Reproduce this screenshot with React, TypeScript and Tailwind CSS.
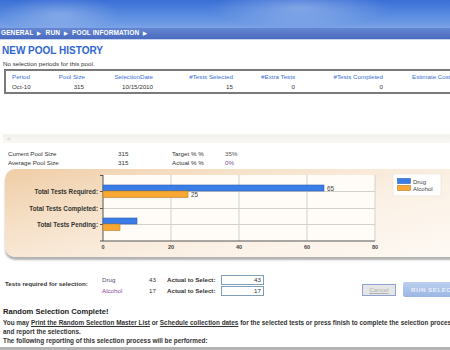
const rows = [
  { label: 'Total Tests Required:', y: 22, drug: 65, alcohol: 25 },
  { label: 'Total Tests Completed:', y: 39, drug: 0, alcohol: 0 },
  { label: 'Total Tests Pending:', y: 55, drug: 10, alcohol: 5 },
];

function Arrow() {
  return <span className="mx-[4px] text-[5px] text-white">▶</span>;
}

function PoolChart() {
  const x0 = 98;
  const scale = 3.4;
  return (
    <svg width="460" height="88" className="block">
      <rect x={x0} y={6} width={272} height={66} fill="#fffcf7" />
      {[20, 40, 60, 80].map((v) => (
        <line key={v} x1={x0 + v * scale} y1={6} x2={x0 + v * scale} y2={72} stroke="#d4d0c8" strokeWidth={1} />
      ))}
      {rows.map((r) => (
        <line key={r.label} x1={x0 - 3} y1={r.y + 0.5} x2={x0 + 272} y2={r.y + 0.5} stroke="#d4d0c8" strokeWidth={1} />
      ))}
      <line x1={x0} y1={6} x2={x0} y2={72} stroke="#555" strokeWidth={1} />
      <line x1={x0 - 3} y1={72} x2={x0 + 272} y2={72} stroke="#555" strokeWidth={1} />
      <line x1={x0 - 3} y1={6.5} x2={x0} y2={6.5} stroke="#555" strokeWidth={1} />
      {rows.map((r) => (
        <line key={r.label + 't'} x1={x0 - 3} y1={r.y + 0.5} x2={x0} y2={r.y + 0.5} stroke="#555" strokeWidth={1} />
      ))}
      {rows.map((r) => (
        <text key={r.label + 'l'} x={x0 - 5} y={r.y + 2.5} textAnchor="end" fontSize="6.3" fontWeight="bold" fill="#333" fontFamily="Liberation Sans, Arial, sans-serif">
          {r.label}
        </text>
      ))}
      {rows.map((r) =>
        r.drug > 0 ? (
          <g key={r.label + 'b'}>
            <rect x={x0} y={r.y - 6} width={r.drug * scale} height={6} fill="#3b7de6" stroke="#2c5fb4" strokeWidth={0.6} />
            <rect x={x0} y={r.y} width={r.alcohol * scale} height={6.5} fill="#f8a832" stroke="#b77d2a" strokeWidth={0.6} />
          </g>
        ) : null,
      )}
      <text x={x0 + 65 * scale + 3} y={21.5} fontSize="6.3" fill="#444" fontFamily="Liberation Sans, Arial, sans-serif">65</text>
      <text x={x0 + 25 * scale + 3} y={28} fontSize="6.3" fill="#444" fontFamily="Liberation Sans, Arial, sans-serif">25</text>
      {[0, 20, 40, 60, 80].map((v) => (
        <text key={v} x={x0 + v * scale} y={80} textAnchor="middle" fontSize="5.5" fontWeight="bold" fill="#444" fontFamily="Liberation Sans, Arial, sans-serif">
          {v}
        </text>
      ))}
      <rect x={388} y={5} width={48} height={22} fill="#ffffff" stroke="#ece6dc" strokeWidth={0.8} />
      <rect x={392.5} y={9.5} width={13} height={5} fill="#3b7de6" stroke="#2c5fb4" strokeWidth={0.6} />
      <rect x={392.5} y={16.5} width={13} height={5} fill="#f8a832" stroke="#b77d2a" strokeWidth={0.6} />
      <text x={408} y={14.5} fontSize="6" fill="#444" fontFamily="Liberation Sans, Arial, sans-serif">Drug</text>
      <text x={408} y={21.5} fontSize="6" fill="#444" fontFamily="Liberation Sans, Arial, sans-serif">Alcohol</text>
    </svg>
  );
}

export default function App() {
  return (
    <div className="w-[450px] h-[350px] overflow-hidden bg-white font-['Liberation_Sans',Arial,sans-serif] text-[6.2px] leading-none text-[#333]">
      {/* sky header */}
      <div className="h-[28px] bg-[radial-gradient(ellipse_60px_18px_at_60px_14px,rgba(255,255,255,0.25),transparent),radial-gradient(ellipse_90px_20px_at_300px_8px,rgba(255,255,255,0.3),transparent),linear-gradient(180deg,#3a6fd6_0%,#5a8ce0_55%,#7aa2e6_100%)]" />
      <div className="h-[12px] flex items-center pl-[1px] bg-[linear-gradient(180deg,#6486d2,#4b6cbf)] border-b border-[#c9d4ee] font-bold text-white text-[6.5px] tracking-[0.1px]">
        <span>GENERAL</span>
        <Arrow />
        <span>RUN</span>
        <Arrow />
        <span>POOL INFORMATION</span>
        <Arrow />
      </div>

      <div className="pl-[2px] pt-[6px] text-[10px] font-bold text-[#2f66cf]">NEW POOL HISTORY</div>
      <div className="pl-[3px] pt-[5px] text-[#333]">No selection periods for this pool.</div>

      {/* history table */}
      <div className="ml-[4px] mt-[2px] w-[480px] h-[25px] border-2 border-[#7a7a7a] border-r-0 flex flex-col justify-center gap-[4px]">
        <div className="flex text-[#3a6fd6]">
          <div className="w-[40px] pl-[6px]">Period</div>
          <div className="w-[41px] text-right pr-[2px]">Pool Size</div>
          <div className="w-[68px] text-right pr-[2px]">SelectionDate</div>
          <div className="w-[80px] text-right pr-[2px]">#Tests Selected</div>
          <div className="w-[62px] text-right pr-[2px]">#Extra Tests</div>
          <div className="w-[88px] text-right pr-[2px]">#Tests Completed</div>
          <div className="pl-[27px]">Estimate Cost</div>
        </div>
        <div className="flex text-[#333]">
          <div className="w-[40px] pl-[6px]">Oct-10</div>
          <div className="w-[41px] text-right pr-[3px]">315</div>
          <div className="w-[68px] text-right pr-[2px]">10/15/2010</div>
          <div className="w-[80px] text-right pr-[2px]">15</div>
          <div className="w-[62px] text-right pr-[2px]">0</div>
          <div className="w-[88px] text-right pr-[2px]">0</div>
        </div>
      </div>

      {/* faded scrollbar */}
      <div className="ml-[3px] mt-[40px] h-[9px] flex items-center bg-[linear-gradient(180deg,#f3f1ec,#f8f7f3)]">
        <span className="pl-[4px] text-[6px] text-[#b8b8b8]">&lt;</span>
      </div>

      {/* pool stats */}
      <div className="mt-[8px] pl-[8px] grid grid-cols-[110px_54px_53px_1fr] gap-y-[2.5px]">
        <div>Current Pool Size</div>
        <div>315</div>
        <div>Target % %</div>
        <div className="text-[#555]">35%</div>
        <div>Average Pool Size</div>
        <div>315</div>
        <div>Actual % %</div>
        <div className="text-[#7a4a9a]">0%</div>
      </div>

      {/* chart panel */}
      <div className="ml-[5px] mt-[3px] w-[460px] h-[88px] rounded-l-[10px] bg-[linear-gradient(165deg,#efcda6_0%,#f6e1c9_30%,#fbf0e4_60%,#fefaf5_100%)] shadow-[0_3px_2px_rgba(0,0,0,0.3)]">
        <PoolChart />
      </div>

      {/* tests required */}
      <div className="mt-[18px] flex items-start">
        <div className="shrink-0 pl-[5px] w-[102px] pt-[6px] font-bold text-[#333]">Tests required for selection:</div>
        <div className="shrink-0 flex flex-col gap-[1px]">
          {[
            { name: 'Drug', count: 43, color: 'text-[#5b4a70]' },
            { name: 'Alcohol', count: 17, color: 'text-[#8a3f9e]' },
          ].map((t) => (
            <div key={t.name} className="flex items-center h-[10px]">
              <div className={`w-[40px] ${t.color}`}>{t.name}</div>
              <div className="w-[14px] text-right">{t.count}</div>
              <div className="w-[64px] pl-[11px] font-bold">Actual to Select:</div>
              <div className="ml-[1px] w-[43px] h-[10px] border border-[#7f9db9] bg-white pr-[2px] flex items-center justify-end">
                {t.count}
              </div>
            </div>
          ))}
        </div>
        <div className="shrink-0 ml-[98px] mt-[9px] w-[34px] h-[12px] border border-[#8fa2cf] bg-[#e6e6e6] flex items-center justify-center text-[#b0b0b0] underline">
          Cancel
        </div>
        <div className="shrink-0 ml-[7px] mt-[7px] w-[60px] h-[15px] rounded-[2px] bg-[linear-gradient(180deg,#bcd0ee,#9ab6e4)] flex items-center pl-[8px] font-bold text-[#e8eef8] tracking-[0.5px] whitespace-nowrap">
          RUN SELECTION
        </div>
      </div>

      {/* completion message */}
      <div className="mt-[11px] pl-[3px] text-[7.6px] font-bold text-[#222]">Random Selection Complete!</div>
      <div className="pl-[3px] pt-[2px] text-[6.4px] font-bold text-[#333] leading-[9px] whitespace-nowrap">
        <div>
          You may <span className="underline">Print the Random Selection Master List</span> or{' '}
          <span className="underline">Schedule collection dates</span> for the selected tests or press finish to complete the selection process
        </div>
        <div>and report the selections.</div>
        <div>The following reporting of this selection process will be performed:</div>
      </div>
      <div className="mt-[2px] h-[4px] bg-[#b4b4b4]" />
    </div>
  );
}
